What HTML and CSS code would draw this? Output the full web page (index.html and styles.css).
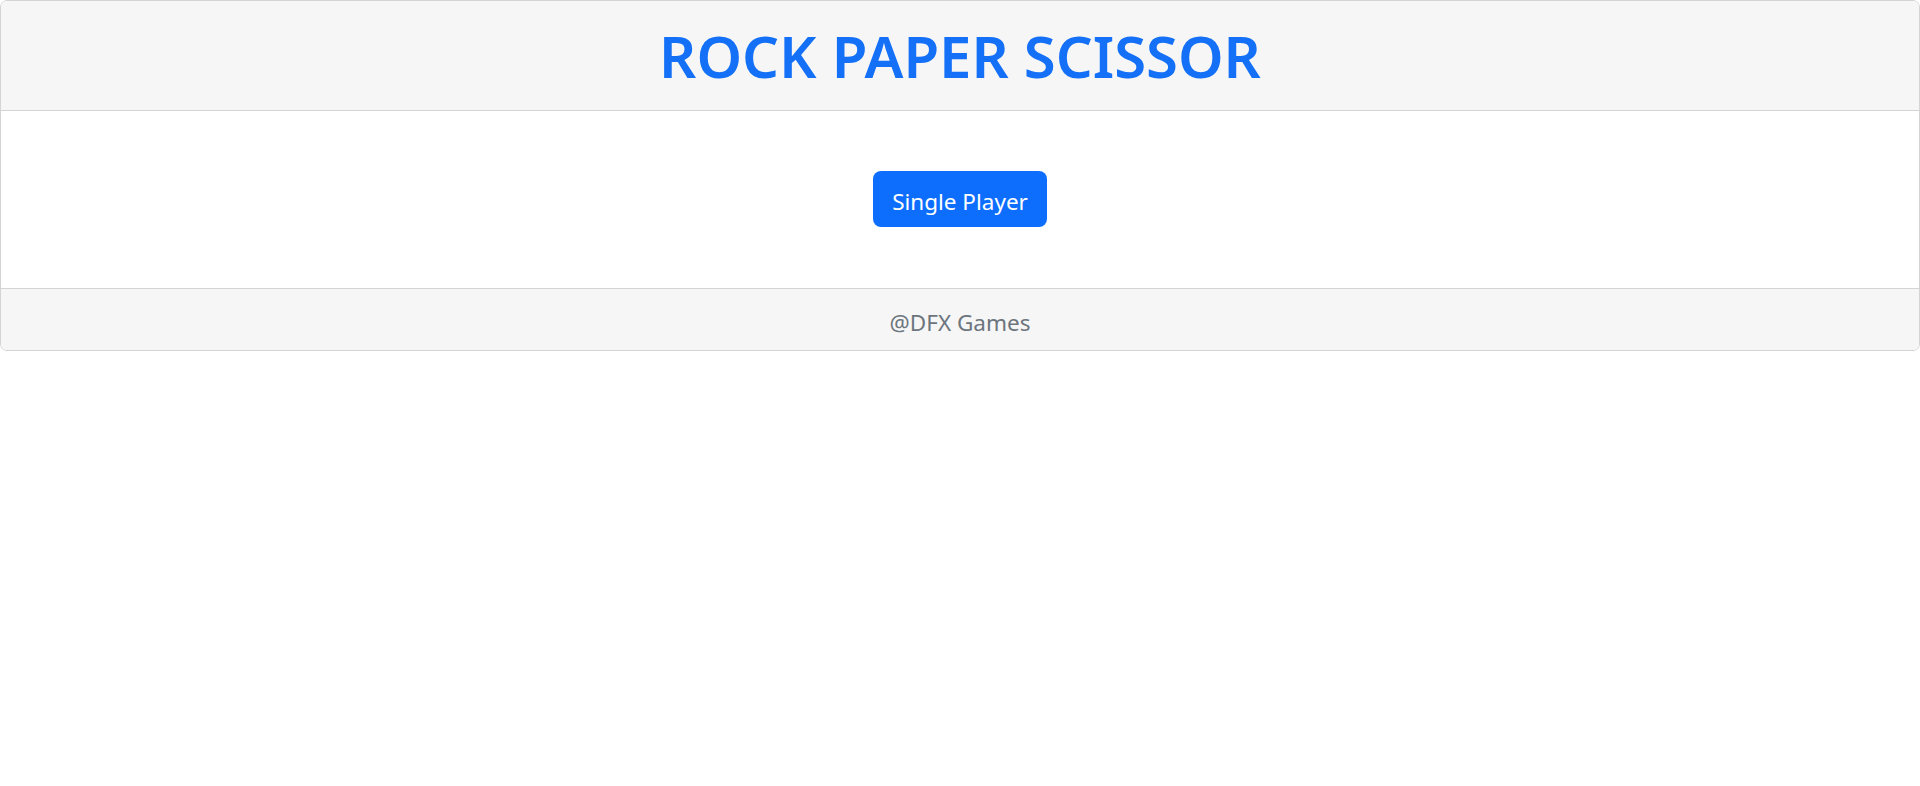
FILE: index.html
```html
<!DOCTYPE html>
<html lang="en">
<head>
<meta charset="utf-8">
<title>Rock Paper Scissor</title>
<link rel="stylesheet" href="styles.css">
</head>
<body>
<div class="card">
  <div class="card-header">
    <h1 class="title">ROCK PAPER SCISSOR</h1>
  </div>
  <div class="card-body">
    <button class="btn">Single Player</button>
  </div>
  <div class="card-footer">@DFX Games</div>
</div>
</body>
</html>
```
FILE: styles.css
```css
* { box-sizing: border-box; }
body {
  margin: 0;
  font-family: "Noto Sans", "Open Sans", sans-serif;
  background: #fff;
}
.card {
  border: 1px solid #d4d4d4;
  border-radius: 7px;
  overflow: hidden;
}
.card-header {
  background: #f6f6f6;
  border-bottom: 1px solid #d4d4d4;
  height: 110px;
  display: flex;
  align-items: center;
  justify-content: center;
}
.title {
  margin: 0;
  color: #1370f7;
  font-size: 58px;
  font-weight: 600;
  line-height: 1;
}
.card-body {
  height: 177px;
  display: flex;
  justify-content: center;
  align-items: flex-start;
  padding-top: 60px;
  background: #fff;
}
.btn {
  background: #0d6efd;
  color: #fff;
  border: none;
  border-radius: 8px;
  font-family: inherit;
  font-size: 22.5px;
  line-height: 36px;
  padding: 13px 19px 7px;
}
.card-footer {
  background: #f6f6f6;
  border-top: 1px solid #d4d4d4;
  height: 62px;
  display: flex;
  align-items: center;
  justify-content: center;
  padding-top: 6px;
  color: #6c757d;
  font-size: 22.5px;
}
```
